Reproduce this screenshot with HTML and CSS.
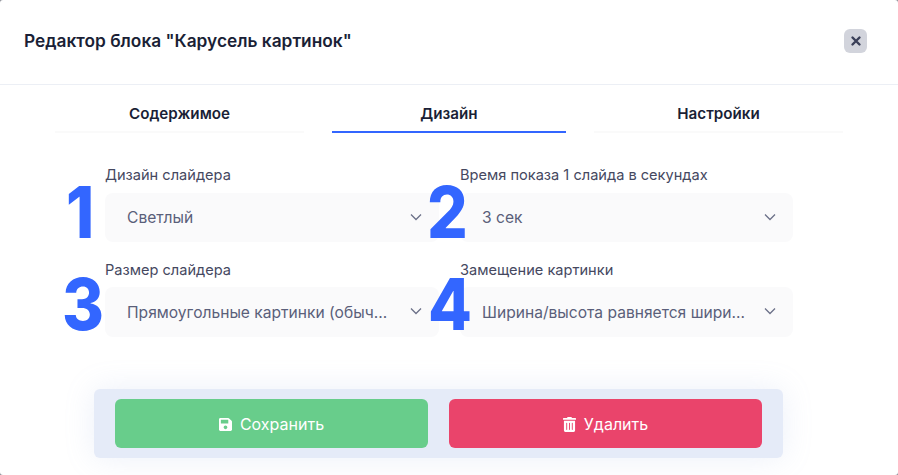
FILE: index.html
```html
<!DOCTYPE html>
<html lang="ru">
<head>
    <meta charset="UTF-8">
    <meta name="viewport" content="width=device-width, initial-scale=1.0">
    <title>Редактор блока</title>
    <link rel="stylesheet" href="styles.css">
</head>
<body>
    <div class="modal">
        <div class="modal-header">
            <h2 class="modal-title">Редактор блока "Карусель картинок"</h2>
            <button class="close-btn" aria-label="Закрыть">
                <svg viewBox="0 0 12 12" width="12" height="12"><path d="M2.5 2.5l7 7M9.500 2.500l-7 7" stroke="#3a3f58" stroke-width="2.4" stroke-linecap="round" fill="none"/></svg>
            </button>
        </div>

        <div class="tabs">
            <div class="tab">Содержимое</div>
            <div class="tab active">Дизайн</div>
            <div class="tab">Настройки</div>
        </div>

        <div class="form-grid">
            <div class="field">
                <span class="big-num num-1">1</span>
                <label class="field-label">Дизайн слайдера</label>
                <div class="select">
                    <span class="select-text">Светлый</span>
                    <svg class="chevron" viewBox="0 0 12 8" width="12" height="8"><path d="M1 1.500l5 5 5-5" stroke="#6b7088" stroke-width="1.300" fill="none"/></svg>
                </div>
            </div>
            <div class="field">
                <span class="big-num num-2">2</span>
                <label class="field-label">Время показа 1 слайда в секундах</label>
                <div class="select">
                    <span class="select-text">3 сек</span>
                    <svg class="chevron" viewBox="0 0 12 8" width="12" height="8"><path d="M1 1.500l5 5 5-5" stroke="#6b7088" stroke-width="1.300" fill="none"/></svg>
                </div>
            </div>
            <div class="field second-row">
                <span class="big-num num-3">3</span>
                <label class="field-label">Размер слайдера</label>
                <div class="select">
                    <span class="select-text">Прямоугольные картинки (обычные)</span>
                    <svg class="chevron" viewBox="0 0 12 8" width="12" height="8"><path d="M1 1.500l5 5 5-5" stroke="#6b7088" stroke-width="1.300" fill="none"/></svg>
                </div>
            </div>
            <div class="field second-row">
                <span class="big-num num-4">4</span>
                <label class="field-label">Замещение картинки</label>
                <div class="select">
                    <span class="select-text">Ширина/высота равняется ширине блока</span>
                    <svg class="chevron" viewBox="0 0 12 8" width="12" height="8"><path d="M1 1.500l5 5 5-5" stroke="#6b7088" stroke-width="1.300" fill="none"/></svg>
                </div>
            </div>
        </div>

        <div class="actions">
            <button class="action-btn save">
                <svg viewBox="0 0 448 512" width="13" height="15"><path fill="#fff" d="M433.941 129.941l-83.882-83.882A48 48 0 0 0 316.118 32H48C21.49 32 0 53.49 0 80v352c0 26.51 21.49 48 48 48h352c26.51 0 48-21.49 48-48V163.882a48 48 0 0 0-14.059-33.941zM224 416c-35.346 0-64-28.654-64-64 0-35.346 28.654-64 64-64s64 28.654 64 64c0 35.346-28.654 64-64 64zm96-304.520V212c0 6.627-5.373 12-12 12H76c-6.627 0-12-5.373-12-12V108c0-6.627 5.373-12 12-12h228.520c3.183 0 6.235 1.264 8.485 3.515l3.480 3.480A11.996 11.996 0 0 1 320 111.480z"/></svg>
                Сохранить
            </button>
            <button class="action-btn delete">
                <svg viewBox="0 0 448 512" width="13" height="15"><path fill="#fff" d="M32 464a48 48 0 0 0 48 48h288a48 48 0 0 0 48-48V128H32zm272-256a16 16 0 0 1 32 0v224a16 16 0 0 1-32 0zm-96 0a16 16 0 0 1 32 0v224a16 16 0 0 1-32 0zm-96 0a16 16 0 0 1 32 0v224a16 16 0 0 1-32 0zM432 32H312l-9.400-18.700A24 24 0 0 0 281.100 0H166.800a23.720 23.720 0 0 0-21.400 13.300L136 32H16A16 16 0 0 0 0 48v32a16 16 0 0 0 16 16h416a16 16 0 0 0 16-16V48a16 16 0 0 0-16-16z"/></svg>
                Удалить
            </button>
        </div>
    </div>
</body>
</html>
```

FILE: styles.css
```css
* {
    box-sizing: border-box;
}
body {
    margin: 0;
    height: 475px;
    overflow: hidden;
    background-color: #8f9199;
    font-family: Inter, "Noto Sans", sans-serif;
}
.modal {
    height: 475px;
    background: #ffffff;
    border-radius: 3px;
    overflow: hidden;
}
.modal-header {
    display: flex;
    justify-content: space-between;
    align-items: center;
    height: 85px;
    padding: 0 31px 3px 24px;
    border-bottom: 1px solid #eceff5;
}
.modal-title {
    margin: 0;
    font-size: 17.3px;
    font-weight: 600;
    color: #1a1f36;
}
.close-btn {
    display: flex;
    justify-content: center;
    align-items: center;
    width: 23px;
    height: 24px;
    padding: 0;
    border: none;
    border-radius: 6px;
    background: #d2d4dc;
}
.tabs {
    display: flex;
    gap: 28px;
    padding: 15px 55px 0 55px;
}
.tab {
    flex: 1;
    height: 33px;
    text-align: center;
    font-size: 15.2px;
    font-weight: 600;
    line-height: 27px;
    color: #1a1f36;
    border-bottom: 2px solid #fafafa;
}
.tab.active {
    flex: 0 0 234px;
    border-bottom-color: #3366ff;
}
.form-grid {
    display: grid;
    grid-template-columns: 334px 333px;
    column-gap: 21px;
    row-gap: 18px;
    padding: 31px 0 0 105px;
}
.field {
    position: relative;
}
.field-label {
    display: block;
    height: 29px;
    font-size: 14.6px;
    line-height: 22px;
    color: #45485f;
}
.second-row .field-label {
    height: 27px;
    line-height: 20px;
}
.select {
    display: flex;
    align-items: center;
    justify-content: space-between;
    height: 49px;
    padding: 0 17px 2px 22px;
    border-radius: 8px;
    background: #fafafb;
}
.second-row .select {
    height: 50px;
}
.select-text {
    width: 268px;
    padding-top: 2px;
    font-size: 15.6px;
    color: #5a5f7a;
    white-space: nowrap;
    overflow: hidden;
    text-overflow: ellipsis;
}
.big-num {
    position: absolute;
    top: 5px;
    font-size: 71px;
    font-weight: 800;
    line-height: 87px;
    color: #3366ff;
    transform: scaleX(0.9);
    transform-origin: left center;
}
.second-row .big-num {
    top: 1px;
}
.num-1 { left: -39px; }
.num-2 { left: -33.5px; }
.num-3 { left: -43.5px; }
.num-4 { left: -32.5px; }
.actions {
    display: flex;
    gap: 21px;
    width: 689px;
    margin: 52px 0 0 94px;
    padding: 10px 21px;
    border-radius: 6px;
    background: #e5ebf8;
    box-shadow: 0 0 30px rgba(150, 170, 220, 0.18);
}
.action-btn {
    flex: 1;
    display: flex;
    justify-content: center;
    align-items: center;
    gap: 8px;
    height: 49px;
    padding: 1px 0 0;
    border: none;
    border-radius: 6px;
    font-family: inherit;
    font-size: 16px;
    color: #ffffff;
}
.save {
    background: #68cd8b;
}
.delete {
    background: #ea446b;
}
```
